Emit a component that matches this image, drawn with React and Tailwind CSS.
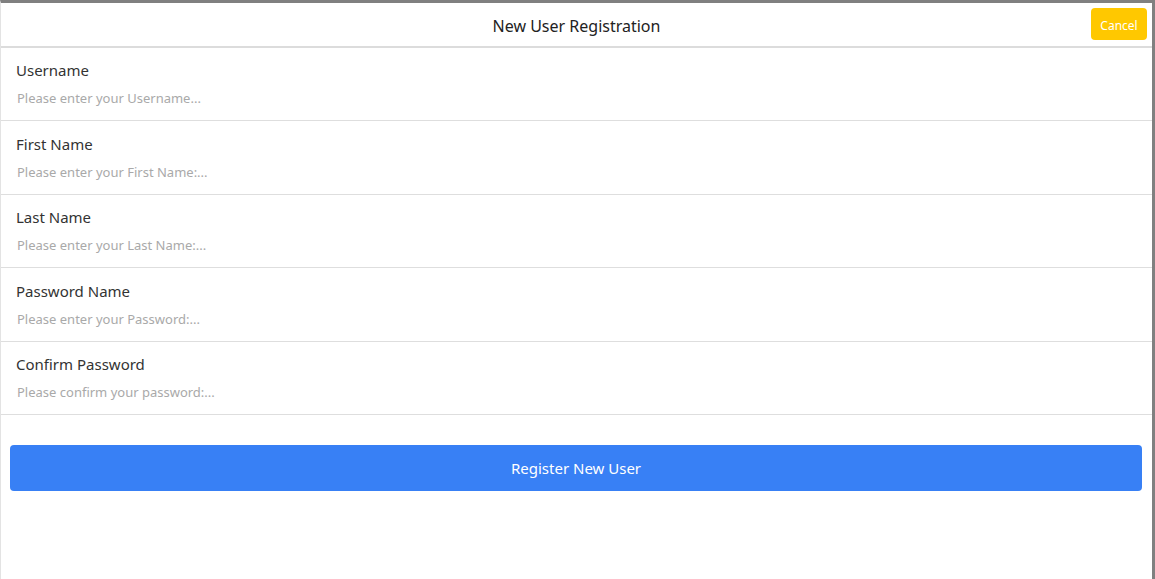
export default function App() {
  const fields = [
    { label: "Username", ph: "Please enter your Username...", h: "h-[73px] pt-[12px]" },
    { label: "First Name", ph: "Please enter your First Name:...", h: "h-[74px] pt-[13px]" },
    { label: "Last Name", ph: "Please enter your Last Name:...", h: "h-[73px] pt-[12px]" },
    { label: "Password Name", ph: "Please enter your Password:...", h: "h-[74px] pt-[13px]" },
    { label: "Confirm Password", ph: "Please confirm your password:...", h: "h-[73px] pt-[12px]" },
  ];
  return (
    <div
      className="w-full h-[579px] bg-white border-t-[3px] border-t-[#808080] border-r-[3px] border-r-[#808080] border-l border-l-[#e3e3e3] flex flex-col"
      style={{ fontFamily: '"Noto Sans", "Open Sans", sans-serif' }}
    >
      <div className="relative h-[45px] border-b-2 border-b-[#dcdcdc] flex items-center justify-center shrink-0">
        <span className="text-[16px] text-[#222] pt-[2px]">New User Registration</span>
        <button className="absolute right-[5px] top-[5px] w-[56px] h-[32px] pt-[3px] rounded-[4px] bg-[#ffc800] text-white text-[12px]">
          Cancel
        </button>
      </div>
      {fields.map((f) => (
        <div key={f.label} className={`${f.h} border-b border-b-[#dedede] pl-[15px] shrink-0`}>
          <div className="h-[20px] leading-[20px] text-[15px] text-[#333]">{f.label}</div>
          <input
            className="h-[36px] w-[90%] outline-none text-[13px] text-[#333] placeholder:text-[#a9a9a9] bg-transparent pl-[1px]"
            placeholder={f.ph}
          />
        </div>
      ))}
      <div className="pt-[30px] pl-[9px] pr-[10px]">
        <button className="w-full h-[46px] rounded-[4px] bg-[#3880f5] text-white text-[15px]">
          Register New User
        </button>
      </div>
    </div>
  );
}
